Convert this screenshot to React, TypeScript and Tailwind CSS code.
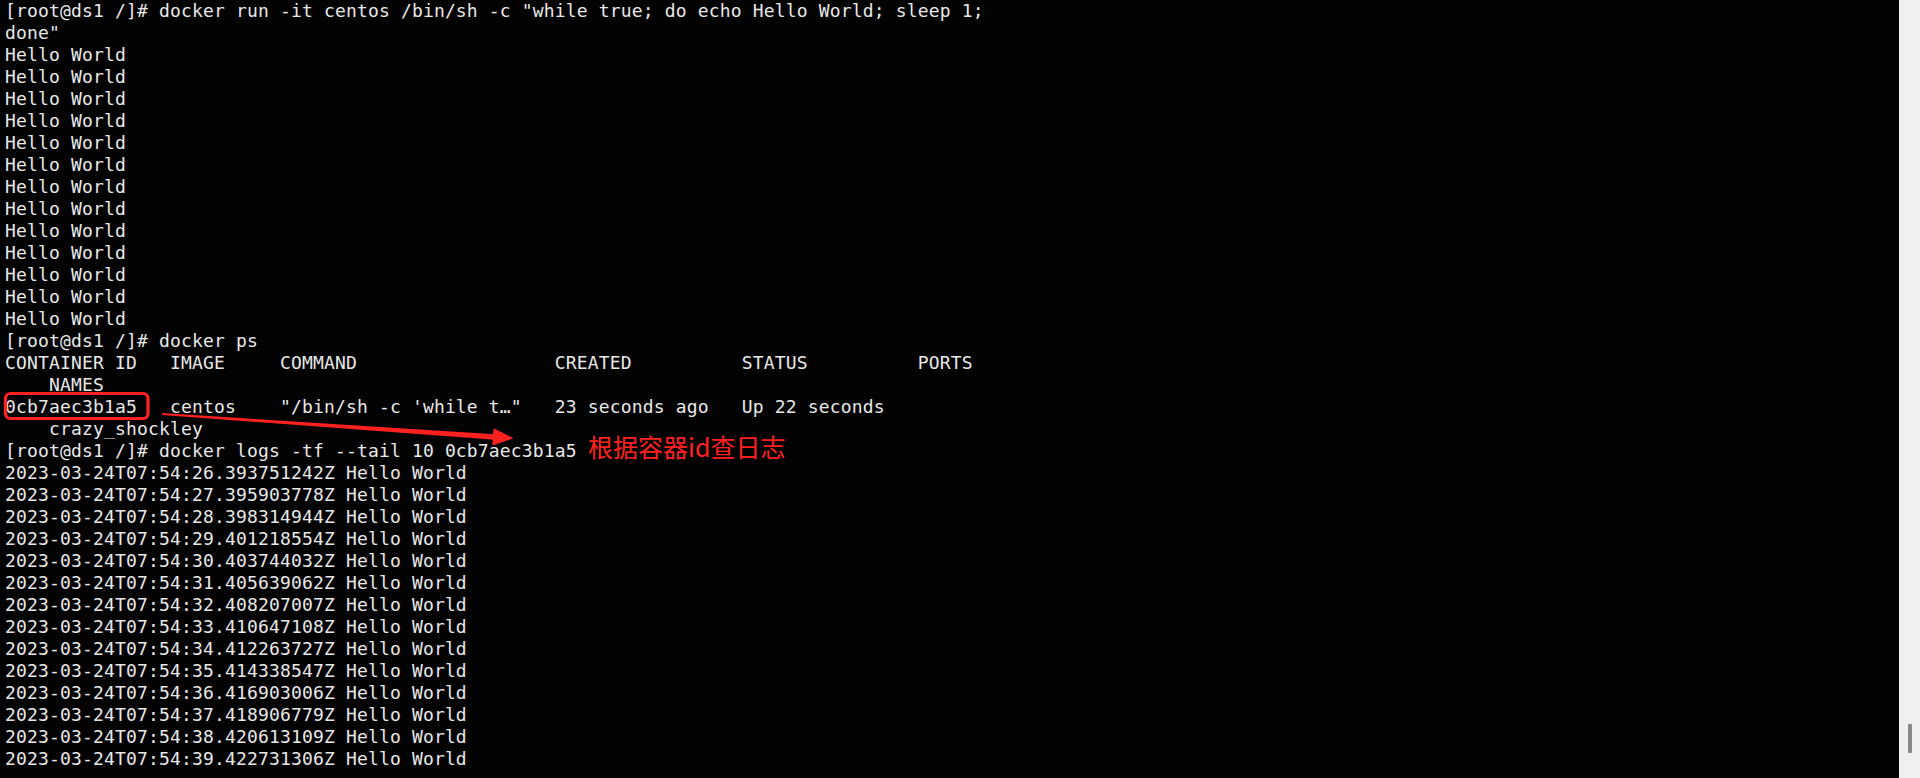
import React from "react";

const lines: string[] = [
  `[root@ds1 /]# docker run -it centos /bin/sh -c "while true; do echo Hello World; sleep 1; `,
  `done"`,
  ...Array(13).fill("Hello World"),
  `[root@ds1 /]# docker ps`,
  `CONTAINER ID   IMAGE     COMMAND                  CREATED          STATUS          PORTS`,
  `    NAMES`,
  `0cb7aec3b1a5   centos    "/bin/sh -c 'while t…"   23 seconds ago   Up 22 seconds`,
  `    crazy_shockley`,
  `[root@ds1 /]# docker logs -tf --tail 10 0cb7aec3b1a5`,
  ...[
    "26.393751242Z",
    "27.395903778Z",
    "28.398314944Z",
    "29.401218554Z",
    "30.403744032Z",
    "31.405639062Z",
    "32.408207007Z",
    "33.410647108Z",
    "34.412263727Z",
    "35.414338547Z",
    "36.416903006Z",
    "37.418906779Z",
    "38.420613109Z",
    "39.422731306Z",
  ].map((t) => `2023-03-24T07:54:${t} Hello World`),
];

export default function App() {
  return (
    <div className="flex h-[778px] w-full overflow-hidden bg-[#030303]">
      <main className="relative flex-1 overflow-hidden pl-[5px]">
        <div
          className="text-[18px] leading-[22px] tracking-[0.16px] text-[#e8e8e8]"
          style={{ fontFamily: '"DejaVu Sans Mono", "Liberation Mono", monospace' }}
        >
          {lines.map((l, i) => (
            <div key={i} className="h-[22px] whitespace-pre">
              {l}
            </div>
          ))}
        </div>
        <svg
          className="pointer-events-none absolute left-0 top-0"
          width="900"
          height="500"
          viewBox="0 0 900 500"
        >
          <rect
            x="5.5"
            y="393.5"
            width="142.5"
            height="25"
            rx="5"
            fill="none"
            stroke="#ff2020"
            strokeWidth="3.2"
          />
          <polygon
            points="162.1,413.1 161.9,414.9 494.8,439.8 495.2,434.2"
            fill="#ff2020"
          />
          <polygon points="513.5,438.2 493.6,428.2 492.4,445.6" fill="#ff2020" />
        </svg>
        <div
          className="absolute left-[588px] top-[434px] whitespace-nowrap text-[25px] leading-[25px] text-[#ff2020]"
          style={{ fontFamily: '"Noto Sans CJK SC", "Noto Sans", sans-serif' }}
        >
          根据容器id查日志
        </div>
      </main>
      <aside className="flex w-[21px] flex-col items-center justify-end bg-[#f0f0f0] pb-[25px]">
        <div className="ml-[1px] h-[29px] w-[4px] rounded-[1px] bg-[#888888]" />
      </aside>
    </div>
  );
}
